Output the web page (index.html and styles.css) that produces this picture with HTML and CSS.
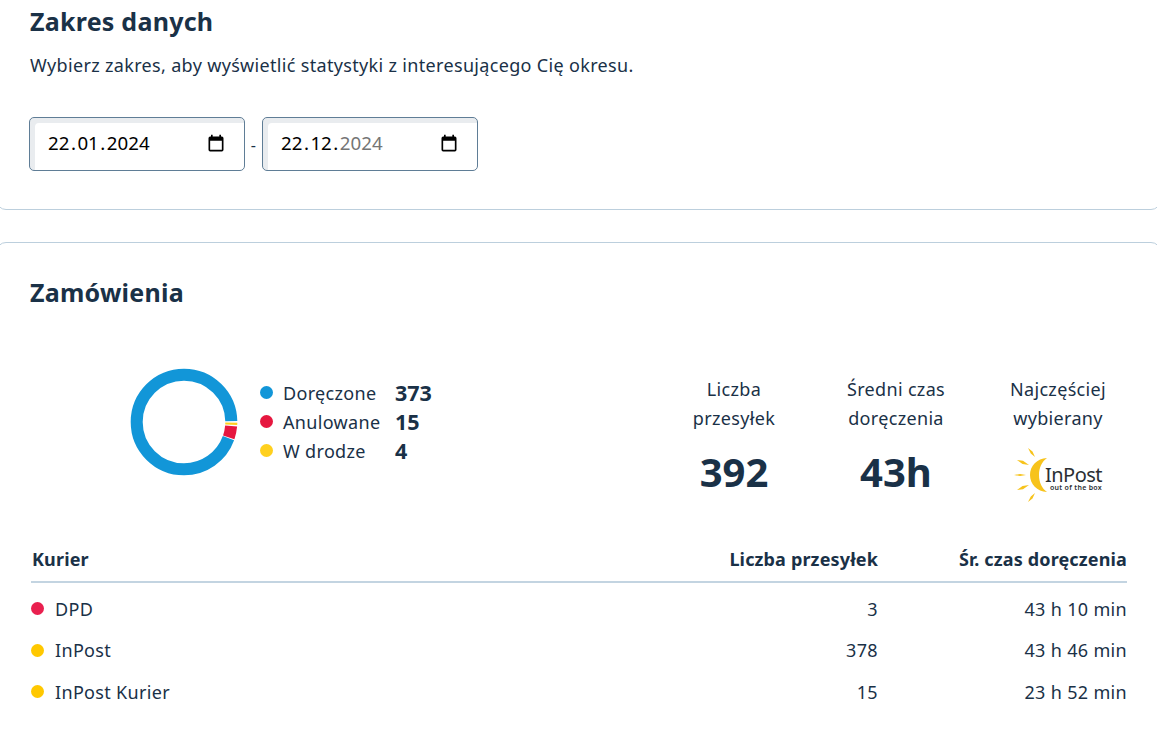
FILE: index.html
```html
<!DOCTYPE html>
<html lang="pl">
<head>
<meta charset="utf-8">
<title>Statystyki</title>
<link rel="stylesheet" href="styles.css">
</head>
<body>
<main class="page">
  <section class="card card-range">
    <h2 class="title">Zakres danych</h2>
    <p class="lead">Wybierz zakres, aby wyświetlić statystyki z interesującego Cię okresu.</p>
    <div class="range">
      <div class="date">
        <span class="date-text">22<i class="sep">.</i>01<i class="sep">.</i>2024</span>
        <svg class="cal" viewBox="0 0 24 24"><path d="M19 3h-1V1h-2v2H8V1H6v2H5a2 2 0 0 0-2 2v14a2 2 0 0 0 2 2h14a2 2 0 0 0 2-2V5a2 2 0 0 0-2-2zm0 16H5V8h14z"/></svg>
      </div>
      <span class="dash">-</span>
      <div class="date">
        <span class="date-text">22<i class="sep">.</i>12<i class="sep">.</i><span class="muted">2024</span></span>
        <svg class="cal" viewBox="0 0 24 24"><path d="M19 3h-1V1h-2v2H8V1H6v2H5a2 2 0 0 0-2 2v14a2 2 0 0 0 2 2h14a2 2 0 0 0 2-2V5a2 2 0 0 0-2-2zm0 16H5V8h14z"/></svg>
      </div>
    </div>
  </section>

  <section class="card card-orders">
    <h2 class="title">Zamówienia</h2>
    <div class="summary">
      <div class="chart">
        <svg class="donut" viewBox="0 0 108 108">
          <circle class="seg seg-blue" cx="54" cy="54" r="47.3" pathLength="360" stroke-dasharray="339 21" stroke-dashoffset="-20"/>
          <circle class="seg seg-red" cx="54" cy="54" r="47.3" pathLength="360" stroke-dasharray="14 346" stroke-dashoffset="-5"/>
          <circle class="seg seg-yellow" cx="54" cy="54" r="47.3" pathLength="360" stroke-dasharray="2.6 357.4" stroke-dashoffset="-0.8"/>
        </svg>
        <ul class="legend">
          <li class="legend-row"><span class="ldot blue"></span><span class="lname">Doręczone</span><b class="lval">373</b></li>
          <li class="legend-row"><span class="ldot red"></span><span class="lname">Anulowane</span><b class="lval">15</b></li>
          <li class="legend-row"><span class="ldot yellow"></span><span class="lname">W drodze</span><b class="lval">4</b></li>
        </ul>
      </div>
      <div class="stats">
        <div class="stat">
          <div class="stat-label">Liczba<br>przesyłek</div>
          <div class="stat-value">392</div>
        </div>
        <div class="stat">
          <div class="stat-label">Średni czas<br>doręczenia</div>
          <div class="stat-value">43h</div>
        </div>
        <div class="stat">
          <div class="stat-label">Najczęściej<br>wybierany</div>
          <div class="logo">
            <svg class="sun" viewBox="0 0 40 56">
              <path class="crescent" d="M33 11 C23 11.500 16 19 16 28 C16 37 23 44.500 33 45 C28 41.500 25 35.500 25 28 C25 20.500 28 14.500 33 11Z"/>
              <path class="ray" d="M14 1 L18.500 4.500 L21 10 L16.800 6.500Z M3 13 L9 13.800 L15 18 L8.500 17Z M0 28 L6 27 L12 28 L6 29Z M3 43 L8.500 39 L15 38 L9 42.200Z M14 55 L16.800 49.500 L21 46 L18.500 51.500Z"/>
            </svg>
            <div class="brand">
              <span class="brand-name">InPost</span>
              <span class="brand-tag">out of the box</span>
            </div>
          </div>
        </div>
      </div>
    </div>
    <div class="couriers">
      <div class="row row-head">
        <span>Kurier</span><span class="num">Liczba przesyłek</span><span class="num">Śr. czas doręczenia</span>
      </div>
      <div class="row row-first">
        <span class="name"><i class="dot red"></i>DPD</span><span class="num">3</span><span class="num">43 h 10 min</span>
      </div>
      <div class="row">
        <span class="name"><i class="dot amber"></i>InPost</span><span class="num">378</span><span class="num">43 h 46 min</span>
      </div>
      <div class="row">
        <span class="name"><i class="dot amber"></i>InPost Kurier</span><span class="num">15</span><span class="num">23 h 52 min</span>
      </div>
    </div>
  </section>
</main>
</body>
</html>
```
FILE: styles.css
```css
* { box-sizing: border-box; }
html, body { margin: 0; padding: 0; height: 100%; overflow: hidden; background: #fff; }
body { font-family: "Noto Sans", "Open Sans", sans-serif; color: #1a3147; font-size: 18px; letter-spacing: 0.33px; }
.page { display: flex; flex-direction: column; gap: 32px; margin: -42px -4px 0; }
.card { border: 1px solid #bccfdd; border-radius: 10px; background: #fff; padding: 0 33px 0 33px; }
.card-range { height: 252px; padding-top: 44px; }
.title { margin: 0; font-size: 25px; line-height: 36px; font-weight: 700; letter-spacing: 0.25px; color: #1a3147; }
.lead { margin: 13px 0 0; font-size: 18px; line-height: 26px; }
.range { display: flex; align-items: center; margin-top: 39px; margin-left: -1px; }
.date { width: 216px; height: 54px; border: 1px solid #5f7d96; border-radius: 5px; box-shadow: inset 5px 5px 0 #e9ecef; display: flex; align-items: center; justify-content: space-between; padding: 0 18px 0 18px; color: #000; background: #fff; }
.date-text { font-size: 18.700px; letter-spacing: 0; padding-bottom: 3px; }
.sep { font-style: normal; padding: 0 1.500px; }
.muted { color: #757575; }
.cal { width: 20px; height: 20px; fill: #000; flex: none; }
.dash { width: 17px; text-align: center; font-size: 16px; padding-top: 2px; }
.card-orders { height: 490px; padding-top: 31px; }
.summary { display: flex; justify-content: space-between; margin-top: 48px; height: 178px; }
.chart { display: flex; margin-left: 100px; padding-top: 10px; }
.donut { width: 108px; height: 108px; }
.seg { fill: none; stroke-width: 12; }
.seg-blue { stroke: #1296d8; }
.seg-red { stroke: #e6173f; }
.seg-yellow { stroke: #ffd01e; }
.legend { list-style: none; margin: 10px 0 0 22px; padding: 0; }
.legend-row { display: flex; align-items: center; height: 29px; }
.ldot { width: 13px; height: 13px; border-radius: 50%; margin-right: 10px; flex: none; }
.ldot.blue { background: #1296d8; }
.ldot.red { background: #e6173f; }
.ldot.yellow { background: #ffd01e; }
.lname { width: 112px; font-size: 18px; }
.lval { font-size: 21.500px; font-weight: 700; letter-spacing: 0; }
.stats { display: flex; margin-right: -12px; padding-top: 17px; }
.stat { width: 162px; text-align: center; }
.stat-label { font-size: 18px; line-height: 29px; }
.stat-value { font-size: 40px; line-height: 54px; font-weight: 700; margin-top: 12px; letter-spacing: 0; }
.logo { display: flex; align-items: flex-start; justify-content: center; height: 56px; margin-top: 14px; letter-spacing: 0; }
.sun { width: 40px; height: 56px; flex: none; margin-right: -9px; }
.crescent { fill: #f7c31b; }
.ray { fill: #f7c31b; }
.brand { display: flex; flex-direction: column; align-items: flex-end; padding-top: 19px; color: #2b2f33; }
.brand-name { font-size: 20px; line-height: 18px; letter-spacing: -0.5px; }
.brand-tag { font-size: 7px; line-height: 8px; font-weight: 600; letter-spacing: 0.3px; white-space: nowrap; }
.couriers { margin-left: 1px; }
.row { display: grid; grid-template-columns: 1fr 200px 249px; align-items: center; height: 41.500px; font-size: 18px; }
.row-head { height: 47px; font-weight: 700; letter-spacing: 0.15px; border-bottom: 2px solid #c3d4e1; }
.row-head > span:first-child { padding-left: 1px; }
.row-first { margin-top: 5px; }
.num { text-align: right; }
.name { display: flex; align-items: center; }
.dot { width: 13px; height: 13px; border-radius: 50%; margin-right: 11px; flex: none; }
.dot.red { background: #e9204f; }
.dot.amber { background: #ffc800; }
```
